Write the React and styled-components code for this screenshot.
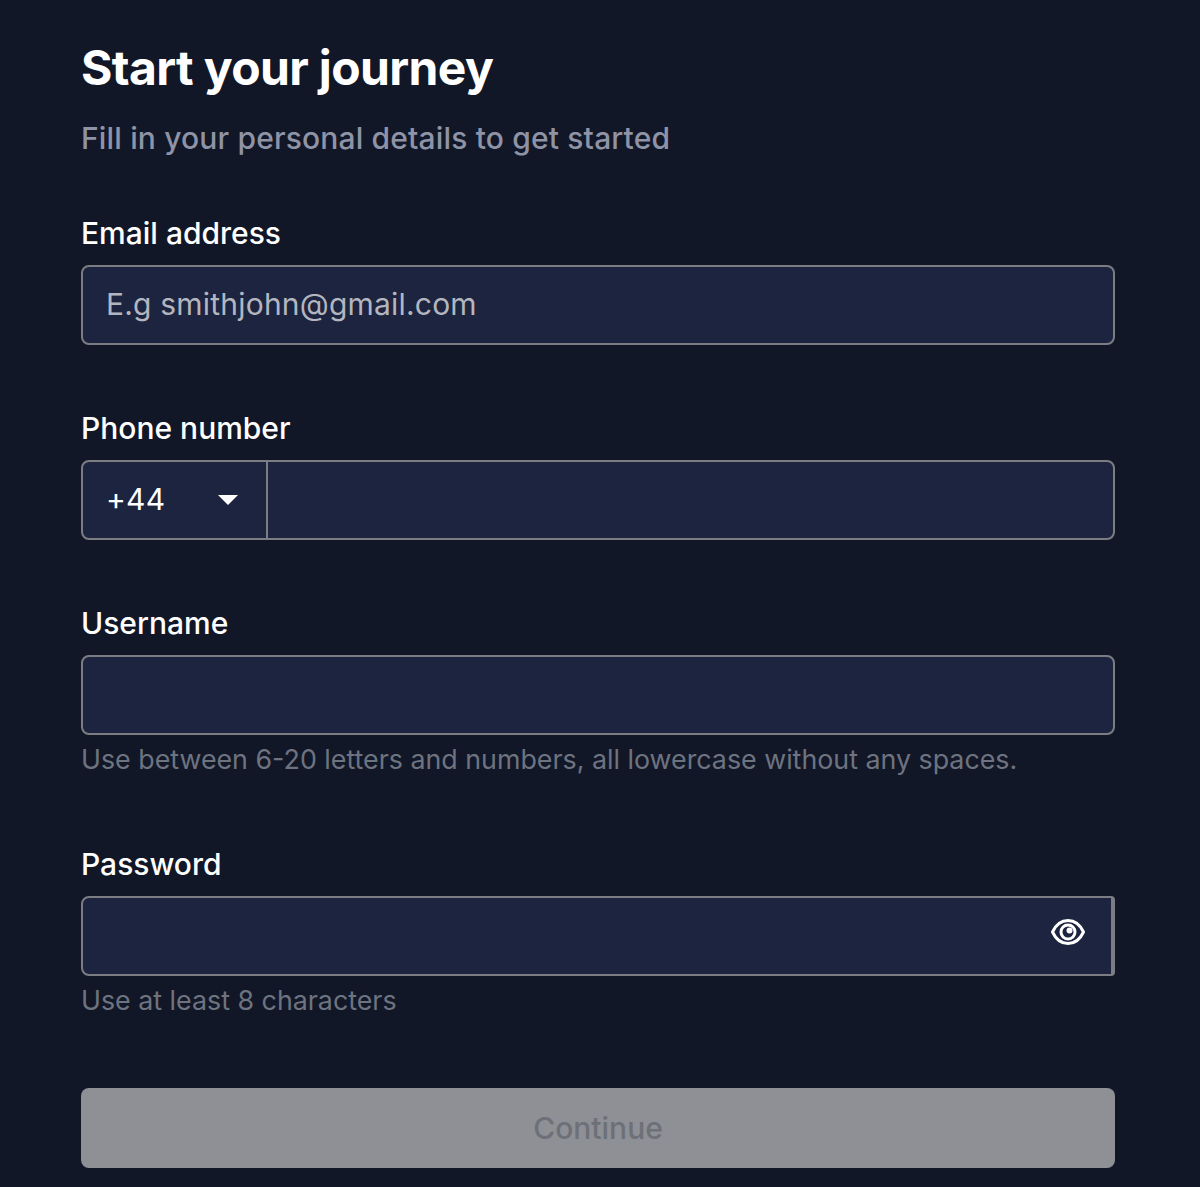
import React from "react";
import styled, { createGlobalStyle } from "styled-components";

const Global = createGlobalStyle`
  html, body { margin: 0; padding: 0; background: #111727; }
  * { box-sizing: border-box; }
`;

const Page = styled.main`
  width: 1200px;
  height: 1187px;
  overflow: hidden;
  background: #111727;
  padding: 39px 85px 0 81px;
  font-family: Inter, "Liberation Sans", sans-serif;
`;

const Title = styled.h1`
  margin: 0;
  height: 58px;
  font-size: 48px;
  line-height: 58px;
  font-weight: 700;
  letter-spacing: -0.63px;
  color: #fff;
`;

const Subtitle = styled.p`
  margin: 19px 0 0;
  height: 44px;
  font-size: 30px;
  line-height: 44px;
  font-weight: 500;
  letter-spacing: 0.16px;
  color: #8f93a6;
`;

const Form = styled.form`
  margin-top: 51px;
  display: flex;
  flex-direction: column;
`;

const Field = styled.div`
  display: flex;
  flex-direction: column;
  margin-bottom: ${(p) => p.$gap}px;
`;

const Label = styled.label`
  font-size: 30px;
  line-height: 44px;
  font-weight: 500;
  color: #fff;
  margin-bottom: 10px;
`;

const Box = styled.div`
  position: relative;
  display: flex;
  height: 80px;
  background: #1d2440;
  border: 2px solid #7c7d83;
  border-radius: 8px;
  overflow: hidden;
  ${(p) => p.$thickRight && "border-right-width: 4px; border-radius: 8px 4px 4px 8px;"}
`;

const Input = styled.input`
  flex: 1;
  min-width: 0;
  height: 100%;
  border: 0;
  outline: 0;
  background: transparent;
  padding: 0 23px 2px;
  font: 400 30px Inter, "Liberation Sans", sans-serif;
  letter-spacing: 0.2px;
  color: #fff;
  &::placeholder { color: #b4b6bf; opacity: 1; }
`;

const Prefix = styled.div`
  width: 185px;
  flex: none;
  display: flex;
  align-items: center;
  justify-content: space-between;
  padding: 0 28px 2px 23px;
  border-right: 2px solid #7c7d83;
  font-size: 30px;
  font-weight: 400;
  letter-spacing: 0.2px;
  color: #fff;
`;

const Caret = styled.span`
  width: 0;
  height: 0;
  margin-top: 2px;
  border-left: 10px solid transparent;
  border-right: 10px solid transparent;
  border-top: 10px solid #fff;
`;

const EyeButton = styled.button`
  position: absolute;
  right: 25px;
  top: 16px;
  width: 36px;
  height: 36px;
  padding: 0;
  border: 0;
  background: none;
  color: #fff;
`;

const Hint = styled.p`
  margin: 5px 0 0;
  height: 38px;
  font-size: 26.8px;
  line-height: 38px;
  font-weight: 400;
  color: #6e7380;
`;

const Continue = styled.button`
  width: 100%;
  height: 80px;
  border: 0;
  border-radius: 8px;
  background: #8e9095;
  color: #6d7078;
  font: 500 30px Inter, "Liberation Sans", sans-serif;
`;

const Eye = () => (
  <svg viewBox="0 0 36 36" width="36" height="36" fill="none" stroke="currentColor" strokeWidth="3">
    <path d="M2.5 18C6 10.500 11.500 6.500 18 6.500S30 10.500 33.500 18C30 25.500 24.500 29.500 18 29.500S6 25.500 2.500 18Z" strokeLinejoin="round" />
    <circle cx="18" cy="18" r="7" />
    <circle cx="19.500" cy="16.500" r="3" fill="currentColor" stroke="none" />
  </svg>
);

export default function App() {
  return (
    <Page>
      <Global />
      <Title>Start your journey</Title>
      <Subtitle>Fill in your personal details to get started</Subtitle>
      <Form onSubmit={(e) => e.preventDefault()}>
        <Field $gap={61}>
          <Label>Email address</Label>
          <Box>
            <Input placeholder="E.g smithjohn@gmail.com" />
          </Box>
        </Field>
        <Field $gap={61}>
          <Label>Phone number</Label>
          <Box>
            <Prefix>
              +44
              <Caret />
            </Prefix>
            <Input />
          </Box>
        </Field>
        <Field $gap={64}>
          <Label>Username</Label>
          <Box>
            <Input />
          </Box>
          <Hint>Use between 6-20 letters and numbers, all lowercase without any spaces.</Hint>
        </Field>
        <Field $gap={69}>
          <Label>Password</Label>
          <Box $thickRight>
            <Input type="password" />
            <EyeButton type="button" aria-label="Show password">
              <Eye />
            </EyeButton>
          </Box>
          <Hint>Use at least 8 characters</Hint>
        </Field>
        <Continue type="button">Continue</Continue>
      </Form>
    </Page>
  );
}
